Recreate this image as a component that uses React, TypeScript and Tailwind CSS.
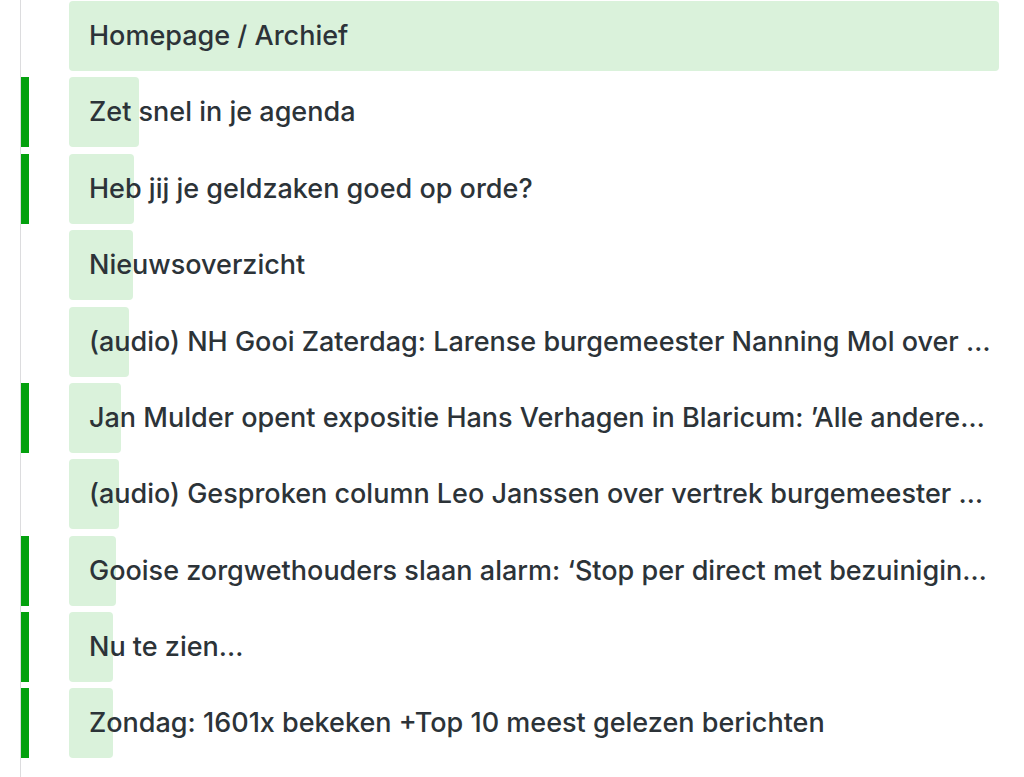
import React from "react";

type Row = { title: string; fill: number | "full"; marked: boolean };

const rows: Row[] = [
  { title: "Homepage / Archief", fill: "full", marked: false },
  { title: "Zet snel in je agenda", fill: 70, marked: true },
  { title: "Heb jij je geldzaken goed op orde?", fill: 65, marked: true },
  { title: "Nieuwsoverzicht", fill: 64, marked: false },
  { title: "(audio) NH Gooi Zaterdag: Larense burgemeester Nanning Mol over de toekomst van Laren", fill: 60, marked: false },
  { title: "Jan Mulder opent expositie Hans Verhagen in Blaricum: ’Alle anderen waren al dood’", fill: 52, marked: true },
  { title: "(audio) Gesproken column Leo Janssen over vertrek burgemeester Mol", fill: 50, marked: false },
  { title: "Gooise zorgwethouders slaan alarm: ‘Stop per direct met bezuinigingen op jeugdzorg’", fill: 47, marked: true },
  { title: "Nu te zien...", fill: 44, marked: true },
  { title: "Zondag: 1601x bekeken +Top 10 meest gelezen berichten", fill: 44, marked: true },
];

export default function App() {
  return (
    <div
      className="w-[1024px] h-[777px] bg-white overflow-hidden flex"
      style={{ fontFamily: "Inter, 'Noto Sans', sans-serif" }}
    >
      <div className="w-[20px] shrink-0 bg-white" />
      <div className="w-[1004px] shrink-0 border-l border-[#dcdcde] pt-[1px] flex flex-col gap-[6.375px]">
        {rows.map((r, i) => (
          <div key={i} className="flex h-[70px] shrink-0">
            <div className={`w-[8px] shrink-0 ${r.marked ? "bg-[#04a10e]" : ""}`} />
            <div className="ml-[40px] w-[930px] shrink-0 relative rounded-[4px] flex items-center">
              <div
                className="absolute left-0 top-0 bottom-0 bg-[#daf2db] rounded-[4px]"
                style={{ width: r.fill === "full" ? "100%" : `${r.fill}px` }}
              />
              <div className="relative w-full pl-[20px] pr-0 text-[27px] font-medium text-[#2c3338] truncate leading-[36px]">
                {r.title}
              </div>
            </div>
          </div>
        ))}
      </div>
    </div>
  );
}
